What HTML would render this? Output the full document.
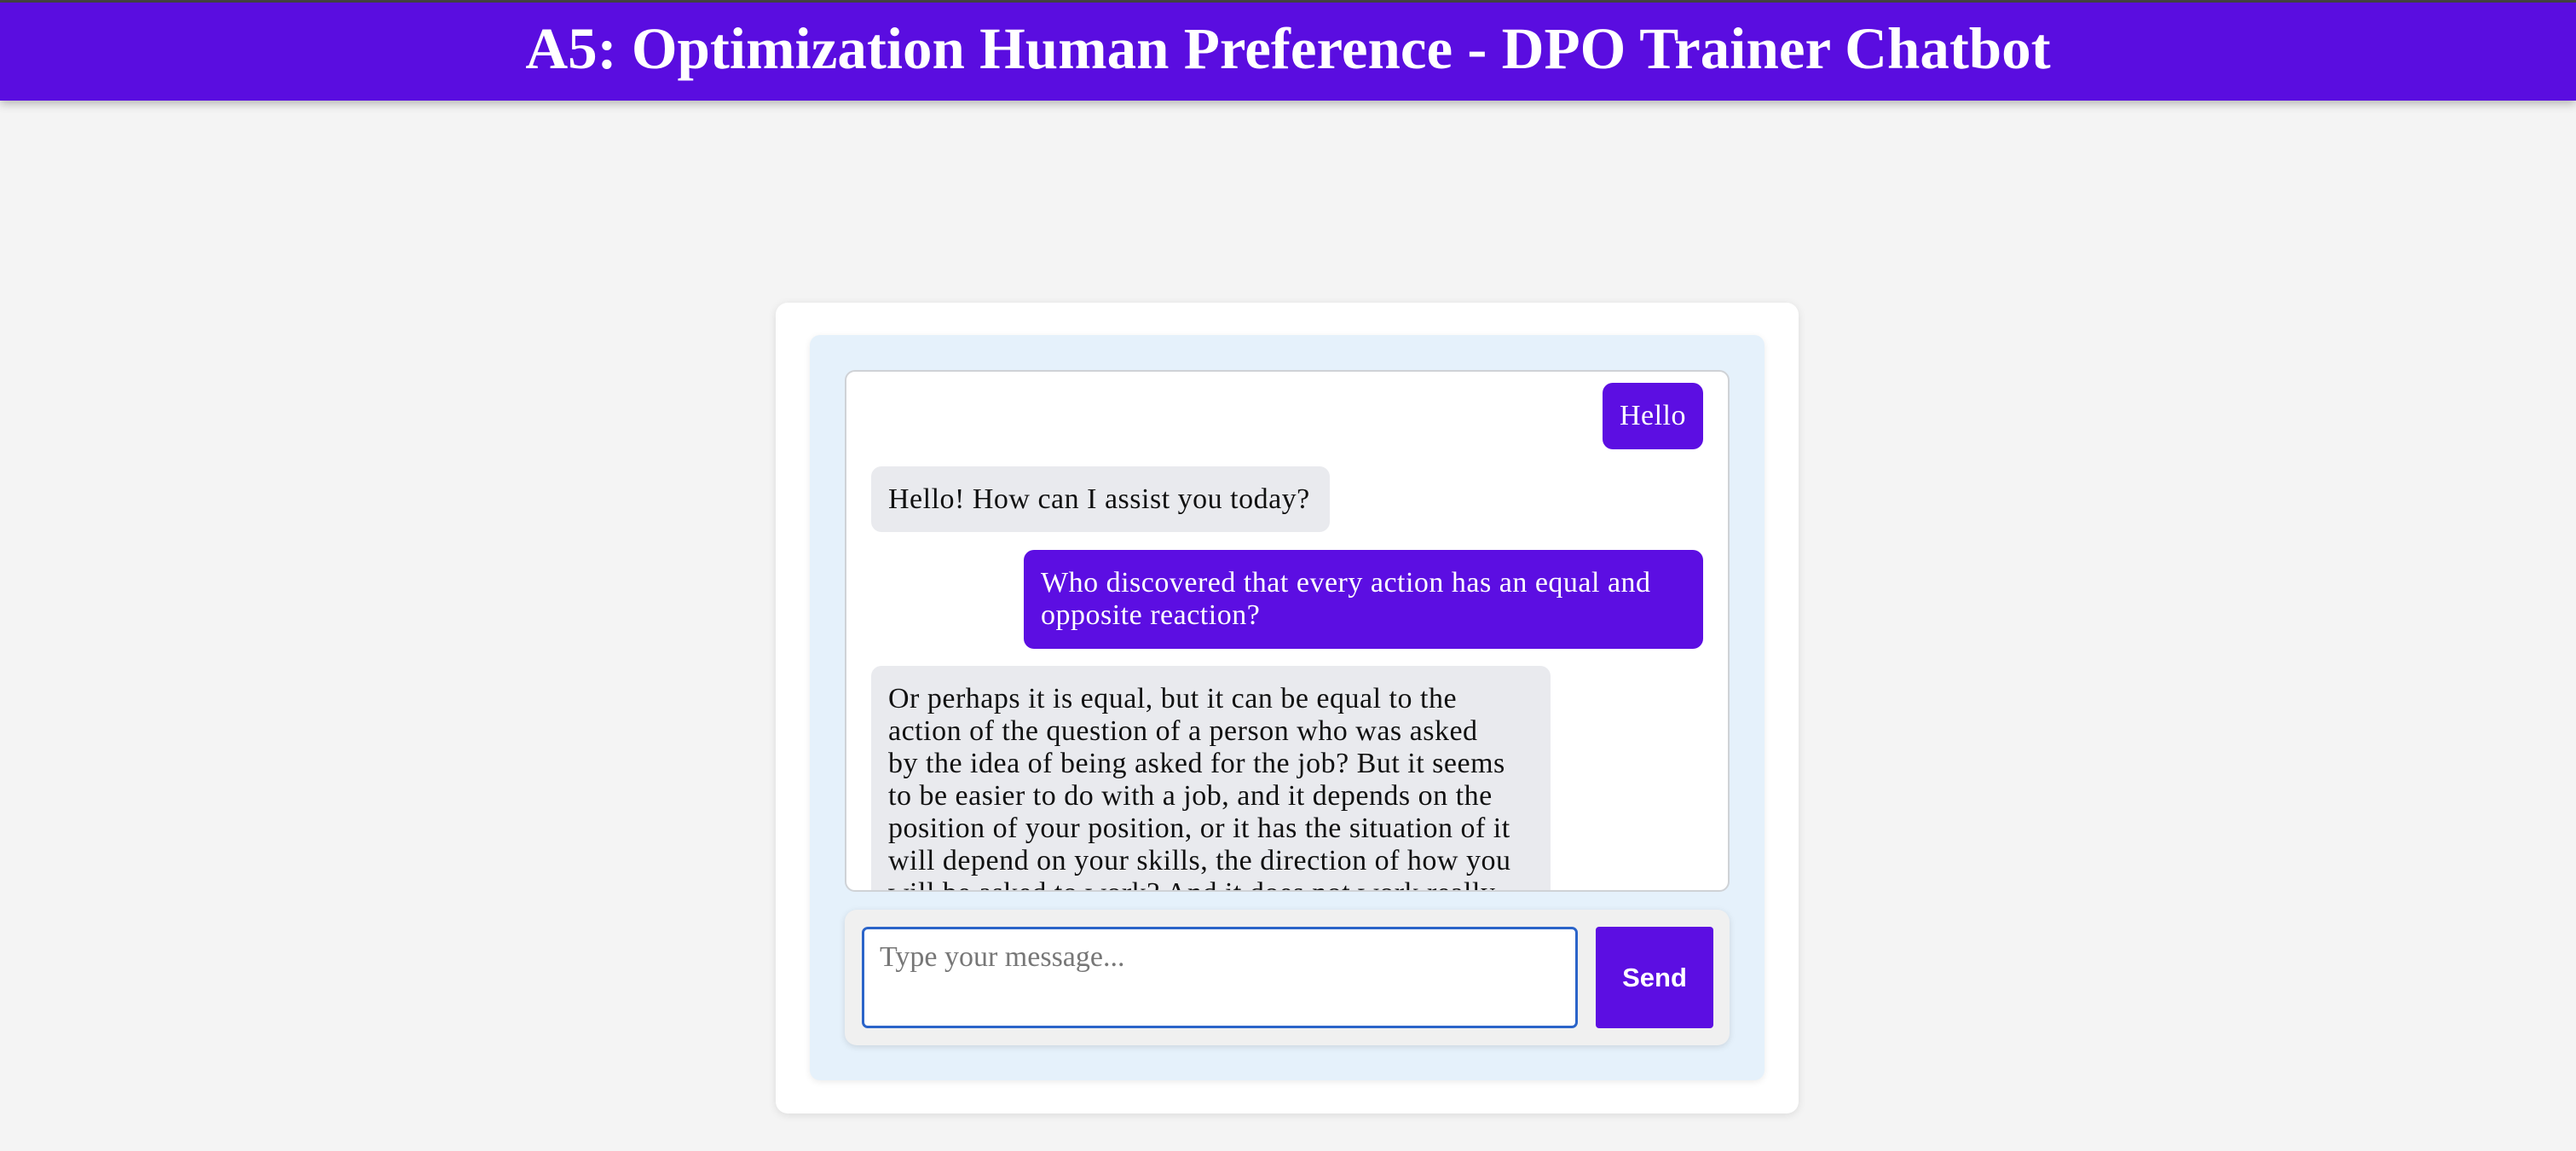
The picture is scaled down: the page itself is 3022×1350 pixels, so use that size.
<!DOCTYPE html>
<html><head><meta charset="utf-8"><style>
*{box-sizing:border-box;margin:0;padding:0}
body{width:3022px;height:1350px;background:#f4f4f4;font-family:"Liberation Serif",serif;position:relative;overflow:hidden}
.top{position:absolute;left:0;top:0;width:3022px;height:3px;background:#444}
header{position:absolute;left:0;top:3px;width:3022px;height:115px;background:#5a0de0;box-shadow:0 4px 10px rgba(0,0,0,.25);color:#fff;text-align:center;font-weight:bold;font-size:69px;line-height:108px}
.card{position:absolute;left:910px;top:355px;width:1200px;height:951px;background:#fff;border-radius:14px;box-shadow:0 2px 10px rgba(0,0,0,.1)}
.panel{position:absolute;left:950px;top:393px;width:1120px;height:874px;background:#e5f1fb;border-radius:12px;box-shadow:0 2px 8px rgba(0,0,0,.08)}
.msgs{position:absolute;left:991px;top:434px;width:1038px;height:612px;background:#fff;border:2px solid #cfd2d6;border-radius:12px;overflow:hidden}
.b{position:absolute;font-size:34px;letter-spacing:0.5px;line-height:38px;padding:20px 20px;border-radius:12px;white-space:nowrap}
.u{background:#5c0ee2;color:#fff}
.g{background:#e9eaee;color:#111}
.inp{position:absolute;left:991px;top:1067px;width:1038px;height:159px;background:#f0f0f0;border-radius:14px;box-shadow:0 2px 8px rgba(0,0,0,.12)}
.ta{position:absolute;left:1011px;top:1087px;width:840px;height:119px;background:#fff;border:3px solid #2b64c9;border-radius:7px;font-size:34px;color:#777;padding:14px 18px}
.send{position:absolute;left:1872px;top:1087px;width:138px;height:119px;background:#5c0ee2;border-radius:4px;color:#fff;font-family:"Liberation Sans",sans-serif;font-weight:bold;font-size:31px;line-height:119px;text-align:center}
</style></head><body>
<div class="top"></div>
<header>A5: Optimization Human Preference - DPO Trainer Chatbot</header>
<div class="card"></div>
<div class="panel"></div>
<div class="msgs">
<div class="b u" style="right:29px;top:13px;height:78px">Hello</div>
<div class="b g" style="left:29px;top:111px;width:538px;height:77px">Hello! How can I assist you today?</div>
<div class="b u" style="right:29px;top:209px;width:797px;height:116px">Who discovered that every action has an equal and<br>opposite reaction?</div>
<div class="b g" style="left:29px;top:345px;width:797px;height:400px">Or perhaps it is equal, but it can be equal to the<br>action of the question of a person who was asked<br>by the idea of being asked for the job? But it seems<br>to be easier to do with a job, and it depends on the<br>position of your position, or it has the situation of it<br>will depend on your skills, the direction of how you<br>will be asked to work? And it does not work really</div>
</div>
<div class="inp"></div>
<div class="ta">Type your message...</div>
<div class="send">Send</div>
</body></html>
